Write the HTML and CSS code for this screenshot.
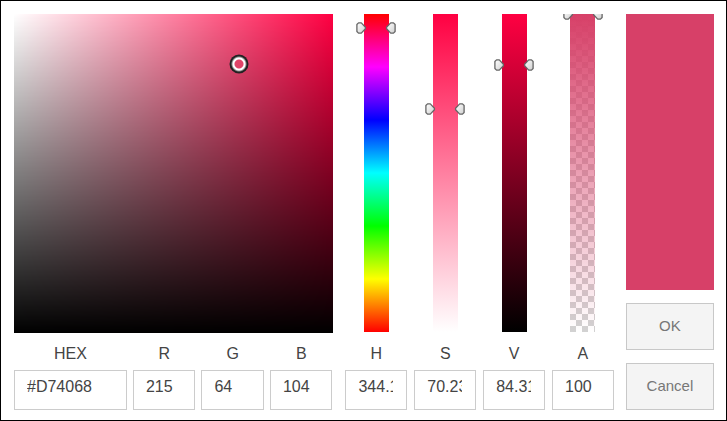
FILE: index.html
```html
<!DOCTYPE html>
<html lang="en">
<head>
<meta charset="utf-8">
<meta name="viewport" content="width=device-width, initial-scale=1">
<title>Color picker</title>
<link rel="stylesheet" href="styles.css">
</head>
<body>
<svg class="defs" aria-hidden="true">
  <defs>
    <linearGradient id="knob" x1="0" y1="0" x2="1" y2="1">
      <stop offset="0" stop-color="#fff"/>
      <stop offset="1" stop-color="#d0d0d0"/>
    </linearGradient>
    <symbol id="handles" viewBox="0 0 40 12">
      <path d="M2.5 .9H5.3L9.4 5.2V6.8L5.3 11.1H2.5L.9 9.5V2.5Z" fill="url(#knob)" stroke="#666" stroke-width="1.3" stroke-linejoin="round"/>
      <path d="M37.5 .9H34.7L30.6 5.2V6.8L34.7 11.1H37.5L39.1 9.5V2.5Z" fill="url(#knob)" stroke="#666" stroke-width="1.3" stroke-linejoin="round"/>
    </symbol>
  </defs>
</svg>
<main class="picker">
  <section class="left">
    <div class="field-area">
      <span class="ring"></span>
    </div>
    <div class="rgb">
      <div class="field"><label for="hex">HEX</label><input id="hex" type="text" value="#D74068"></div>
      <div class="field"><label for="r">R</label><input id="r" type="text" value="215"></div>
      <div class="field"><label for="g">G</label><input id="g" type="text" value="64"></div>
      <div class="field"><label for="b">B</label><input id="b" type="text" value="104"></div>
    </div>
  </section>
  <section class="channels">
    <div class="channel">
      <div class="slider">
        <div class="bar hue"></div>
        <svg class="handles" style="top: 4.5%"><use href="#handles"/></svg>
        <input class="range" type="range" min="0" max="360" value="344" aria-label="Hue">
      </div>
      <div class="field"><label for="h">H</label><input id="h" type="text" value="344.11"></div>
    </div>
    <div class="channel">
      <div class="slider">
        <div class="bar saturation"></div>
        <svg class="handles" style="top: 29.7%"><use href="#handles"/></svg>
        <input class="range" type="range" min="0" max="100" value="70" aria-label="Saturation">
      </div>
      <div class="field"><label for="s">S</label><input id="s" type="text" value="70.23"></div>
    </div>
    <div class="channel">
      <div class="slider">
        <div class="bar value"></div>
        <svg class="handles" style="top: 15.9%"><use href="#handles"/></svg>
        <input class="range" type="range" min="0" max="100" value="84" aria-label="Value">
      </div>
      <div class="field"><label for="v">V</label><input id="v" type="text" value="84.31"></div>
    </div>
    <div class="channel">
      <div class="slider">
        <div class="bar alpha"></div>
        <svg class="handles" style="top: 0%"><use href="#handles"/></svg>
        <input class="range" type="range" min="0" max="100" value="100" aria-label="Alpha">
      </div>
      <div class="field"><label for="a">A</label><input id="a" type="text" value="100"></div>
    </div>
  </section>
  <section class="actions">
    <div class="swatch"></div>
    <button type="button">OK</button>
    <button type="button">Cancel</button>
  </section>
</main>
</body>
</html>
```
FILE: styles.css
```css
* {
  box-sizing: border-box;
}

body {
  margin: 0;
  background: #fff;
  color: #444;
  font: 16px/20px "Liberation Sans", Arial, sans-serif;
}

.defs {
  position: absolute;
  width: 0;
  height: 0;
}

.picker {
  display: grid;
  grid-template-columns: 319fr 268fr 88fr;
  column-gap: 12px;
  min-height: 100vh;
  padding: 13px 12px 10px 13px;
  border: 1px solid #000;
}

.left {
  display: flex;
  flex-direction: column;
}

.field-area {
  position: relative;
  aspect-ratio: 1;
  background:
    linear-gradient(to bottom, transparent, #000),
    linear-gradient(to right, #fff, #ff0042);
}

.ring {
  position: absolute;
  left: 70.4%;
  top: 15.8%;
  width: 19px;
  height: 19px;
  border-radius: 50%;
  transform: translate(-50%, -50%);
  background: radial-gradient(circle, #e04468 4px, #fff 5px, #fff 6px, #222 8px);
}

.rgb {
  display: grid;
  grid-template-columns: 112fr 62fr 62fr 62fr;
  column-gap: 6px;
  padding-right: 1px;
}

.channels {
  display: grid;
  grid-template-columns: repeat(4, 1fr);
  column-gap: 7px;
}

.channel {
  display: flex;
  flex-direction: column;
  min-width: 0;
}

.slider {
  position: relative;
  display: flex;
  flex: 1;
  justify-content: center;
  padding-bottom: 1px;
  overflow: hidden;
}

.bar {
  width: 25px;
}

.hue {
  background: linear-gradient(to bottom, #f00, #f0f, #00f, #0ff, #0f0, #ff0, #f00);
}

.saturation {
  background: linear-gradient(to bottom, #ff0042, #fff);
}

.value {
  background: linear-gradient(to bottom, #ff0042, #000);
}

.alpha {
  background:
    linear-gradient(to bottom, #d74068, rgb(215 64 104 / 0)),
    repeating-conic-gradient(#fff 0 25%, #d2d2d2 0 50%) 0 0 / 12px 12px;
}

.handles {
  position: absolute;
  left: 50%;
  width: 40px;
  height: 12px;
  transform: translate(-50%, -50%);
}

.range {
  position: absolute;
  inset: 0;
  width: 100%;
  height: 100%;
  margin: 0;
  opacity: 0;
  writing-mode: vertical-lr;
  direction: rtl;
}

.field {
  display: flex;
  flex-direction: column;
  min-width: 0;
}

.field label {
  padding: 11px 0 6px;
  text-align: center;
}

.field input {
  width: 100%;
  height: 40px;
  padding: 0 13px 6px 12px;
  border: 1px solid #ccc;
  border-radius: 0;
  background: #fff;
  color: inherit;
  font: inherit;
}

.actions {
  display: flex;
  flex-direction: column;
  gap: 13px;
}

.swatch {
  flex: 1;
  background: #d74068;
}

.actions button {
  height: 47px;
  padding: 0 0 2px;
  border: 1px solid #c8c8c8;
  border-radius: 0;
  background: #f4f4f4;
  color: #777;
  font: inherit;
  font-size: 15px;
}
```
